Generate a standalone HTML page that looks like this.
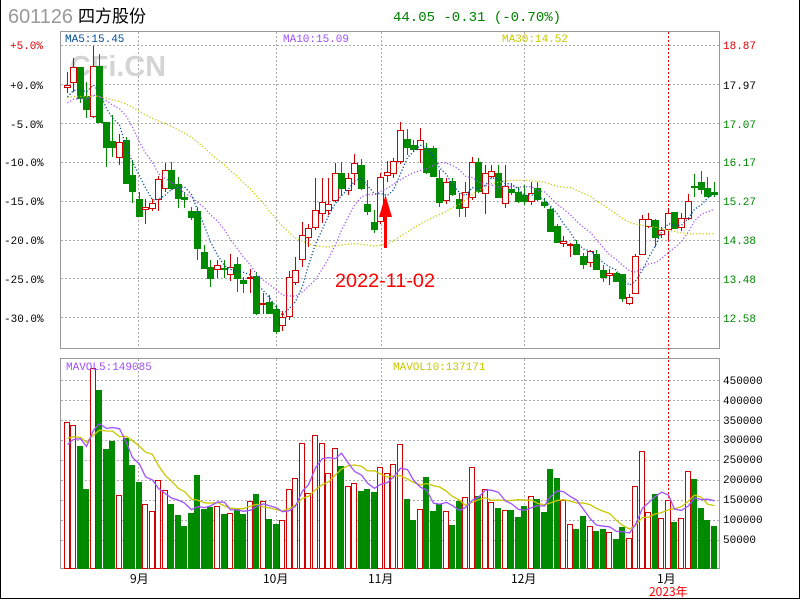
<!DOCTYPE html>
<html><head><meta charset="utf-8"><style>
html,body{margin:0;padding:0;background:#fff}
#w{position:relative;width:800px;height:600px;overflow:hidden;background:#fff}
svg text{font-family:"Liberation Mono","Noto Sans CJK SC",monospace}
svg text.sans{font-family:"Liberation Sans",sans-serif}
</style></head><body><div id="w">
<svg id="s" width="800" height="600" viewBox="0 0 800 600" xmlns="http://www.w3.org/2000/svg" shape-rendering="crispEdges">
<rect x="0.5" y="-1" width="799" height="599.5" fill="none" stroke="#000"/>
<text class="sans" x="8" y="23" font-size="20" fill="#999" textLength="65" lengthAdjust="spacingAndGlyphs">601126</text>
<text x="78" y="22" font-size="17" fill="#000" style="font-family:'Noto Sans CJK SC',sans-serif">四方股份</text>
<text x="393" y="21" font-size="14" fill="#008000">44.05 -0.31 (-0.70%)</text>
<g id="grid" stroke="#aaa" stroke-dasharray="2,2"></g>
<rect x="60.5" y="31.5" width="659" height="317" fill="none" stroke="#999"/>
<rect x="60.5" y="358.5" width="659" height="210" fill="none" stroke="#999"/>
<line x1="668.5" y1="32" x2="668.5" y2="568" stroke="#f00" stroke-dasharray="2,2"/>
<text class="sans" x="70" y="76" font-weight="bold" font-size="29" fill="#d4d4d4" textLength="96" lengthAdjust="spacingAndGlyphs" style="font-weight:bold">CFi.CN</text>
<g id="c"></g>
<g font-size="11">
<text x="10" y="49" fill="#d00">+5.0%</text>
<text x="10" y="89" fill="#000">+0.0%</text>
<text x="10" y="128" fill="#000">-5.0%</text>
<text x="4" y="166" fill="#000">-10.0%</text>
<text x="4" y="205" fill="#000">-15.0%</text>
<text x="4" y="244" fill="#000">-20.0%</text>
<text x="4" y="283" fill="#000">-25.0%</text>
<text x="4" y="322" fill="#000">-30.0%</text>
<text x="723" y="49" fill="#d00">18.87</text>
<text x="723" y="89" fill="#000">17.97</text>
<text x="723" y="128" fill="#080">17.07</text>
<text x="723" y="166" fill="#080">16.17</text>
<text x="723" y="205" fill="#080">15.27</text>
<text x="723" y="244" fill="#080">14.38</text>
<text x="723" y="283" fill="#080">13.48</text>
<text x="723" y="322" fill="#080">12.58</text>
<text x="65" y="42" fill="#004c9c">MA5:15.45</text>
<text x="283" y="42" fill="#a050ff">MA10:15.09</text>
<text x="502" y="42" fill="#c8c800">MA30:14.52</text>
<text x="66" y="370" fill="#a050ff">MAVOL5:149085</text>
<text x="393" y="370" fill="#c8c800">MAVOL10:137171</text>
<text x="723" y="384">450000</text><text x="723" y="404">400000</text>
<text x="723" y="424">350000</text><text x="723" y="443">300000</text>
<text x="723" y="463">250000</text><text x="723" y="483">200000</text>
<text x="723" y="503">150000</text><text x="723" y="523">100000</text>
<text x="723" y="543">50000</text>
</g>
<g font-size="12" fill="#000">
<text x="130" y="583" style="font-family:'Noto Sans CJK SC',sans-serif">9月</text>
<text x="263" y="583" style="font-family:'Noto Sans CJK SC',sans-serif">10月</text>
<text x="368" y="583" style="font-family:'Noto Sans CJK SC',sans-serif">11月</text>
<text x="511" y="583" style="font-family:'Noto Sans CJK SC',sans-serif">12月</text>
<text x="657" y="583" style="font-family:'Noto Sans CJK SC',sans-serif">1月</text>
<text x="649" y="596" fill="#f00" style="font-family:'Noto Sans CJK SC',sans-serif">2023年</text>
</g>
<text class="sans" x="335" y="287" font-size="19" fill="#f00" textLength="100" lengthAdjust="spacingAndGlyphs">2022-11-02</text>
<g fill="#f00" shape-rendering="auto"><rect x="384" y="210" width="3" height="38"/><polygon points="385.5,195 379,217 392,217"/></g>
</svg></div>
<script>
var D=`85,87,72,93,r 67,82,58,92,r 67,98,67,103,g 96,109,82,118,g 66,116,46,118,r 66,122,54,122,g 122,147,122,167,g 141,147,115,157,g 142,157,134,165,r 140,183,137,183,g 175,191,160,203,g 199,216,192,216,g 207,209,199,224,r 203,208,199,211,r 179,199,176,211,r 170,188,163,192,r 170,188,162,190,g 184,198,177,208,g 197,199,192,208,g 211,217,207,220,g 211,248,207,260,g 252,268,245,268,g 267,278,260,287,g 265,269,260,278,r 268,269,260,278,g 267,274,254,281,r 264,278,257,292,g 280,283,277,293,g 277,278,269,293,r 276,313,272,315,g 303,304,293,314,r 302,313,295,313,g 309,331,305,334,g 317,325,311,331,r 277,316,271,320,r 270,282,257,285,r 235,259,222,267,r 228,237,224,247,r 210,227,178,230,r 202,213,178,223,r 204,210,178,215,r 173,200,163,202,r 173,188,162,196,g 178,190,173,195,r 163,173,154,185,r 165,188,159,190,g 204,211,180,215,g 222,229,210,233,g 177,221,173,224,r 172,175,161,182,r 161,173,158,178,r 130,161,122,164,r 139,147,129,155,g 145,149,140,152,g 140,149,128,163,r 148,172,143,174,g 148,176,146,176,g 178,202,170,207,g 182,200,178,204,r 181,194,178,196,g 199,208,193,217,g 192,207,182,217,r 162,197,157,200,r 162,191,158,193,g 173,193,165,214,r 171,176,165,178,r 173,197,165,198,g 186,203,165,208,r 189,192,184,195,g 192,201,187,203,g 195,201,185,205,g 193,201,182,205,r 188,199,182,201,g 202,205,198,208,g 209,231,207,231,g 226,242,224,242,g 241,243,236,247,r 244,245,243,257,r 244,254,240,254,g 256,264,253,269,g 251,262,250,267,r 254,269,250,269,g 270,277,265,282,g 273,275,269,285,r 273,281,272,282,g 274,298,274,302,g 297,303,294,305,r 256,293,254,294,r 219,254,215,255,r 219,226,213,228,r 220,237,219,247,g 230,234,227,238,r 213,229,208,240,r 212,228,212,228,g 218,227,213,231,r 201,218,194,220,r 186,187,174,197,g 182,189,171,194,g 188,196,177,196,g 192,194,182,197,g`.split(' ').map(function(s){var a=s.split(',');return [+a[0],+a[1],+a[2],+a[3],a[4]]});
var V=[422.3,425.3,446,489,368.3,390,449,441,495.3,437.7,465,482,504,511.3,480.3,490.3,504,515,526,513,475,509,507,506,514,513.3,509.3,514,501,494,501,519,524,520.3,489.3,478,443.3,493,435.3,443.3,473.3,448.3,466,486.3,483.3,491,489,492,467.3,473.3,464.3,444.3,499,520,509,477,511,504,511,525,501,497,467,496,489,502,508,510,510,517,506,496,499,512,469,478,500,524,529,516,526,531,529,532,539,527,538,486,451,512,494,518,500,522,518,471,479,508,520,526];
var s=document.getElementById('s'),g=document.getElementById('c'),gr=document.getElementById('grid'),h='';
[45,84,123,162,201,240,278,317].forEach(function(y){h+='<line x1="61" y1="'+(y+.5)+'" x2="719" y2="'+(y+.5)+'"/>'});
[380,400,420,440,460,480,500,520,540].forEach(function(y){h+='<line x1="61" y1="'+(y+.5)+'" x2="719" y2="'+(y+.5)+'"/>'});
[138,276,381,524].forEach(function(x){h+='<line x1="'+(x+.5)+'" y1="32" x2="'+(x+.5)+'" y2="348"/><line x1="'+(x+.5)+'" y1="359" x2="'+(x+.5)+'" y2="568"/>'});
gr.innerHTML=h;h='';
function X(i){return Math.round(66.7+6.535*i)}
var R='#d00000',G='#008a00';
D.forEach(function(d,i){var x=X(i),c=d[4]=='r'?R:G;
h+='<line x1="'+(x+.5)+'" y1="'+d[2]+'" x2="'+(x+.5)+'" y2="'+d[3]+'" stroke="'+c+'"/>';
var t=d[0],b=Math.max(d[1],d[0]+1);
if(d[4]=='r')h+='<rect x="'+(x-2.5)+'" y="'+(t+.5)+'" width="6" height="'+(b-t)+'" fill="#fff" stroke="'+c+'" stroke-width="1.3"/>';
else h+='<rect x="'+(x-3)+'" y="'+t+'" width="7" height="'+(b-t+1)+'" fill="'+c+'"/>';
var v=Math.round(V[i]);
if(d[4]=='r')h+='<rect x="'+(x-2.5)+'" y="'+(v+.5)+'" width="5" height="'+(568-v)+'" fill="#fff" stroke="'+c+'" stroke-width="1.3"/>';
else h+='<rect x="'+(x-3)+'" y="'+v+'" width="6" height="'+(569-v)+'" fill="'+c+'"/>';
});
var cl=D.map(function(d){return d[4]=='r'?d[0]:d[1]});
function ma(arr,n,pad){var a=[],out=[];for(var k=0;k<40;k++)a.push(pad);a=a.concat(arr);for(var i=0;i<arr.length;i++){var s=0;for(var j=0;j<n;j++)s+=a[40+i-j];out.push(s/n)}return out}
function pl(arr,col,dash,w){var p=arr.map(function(y,i){return X(i)+0.5+','+y.toFixed(1)}).join(' ');return '<polyline points="'+p+'" fill="none" stroke="'+col+'" stroke-width="'+w+'"'+(dash?' stroke-dasharray="1.2,2"':'')+' shape-rendering="auto"/>'}
h+=pl(ma(cl,30,98),'#c8c800',1,1.3)+pl(ma(cl,10,105),'#a050ff',1,1.3)+pl(ma(cl,5,100),'#004c9c',1,1.3);
h+=pl(ma(V,10,440),'#c8c800',0,1.3)+pl(ma(V,5,450),'#a050ff',0,1.3);
g.innerHTML=h;
</script>
</body></html>
